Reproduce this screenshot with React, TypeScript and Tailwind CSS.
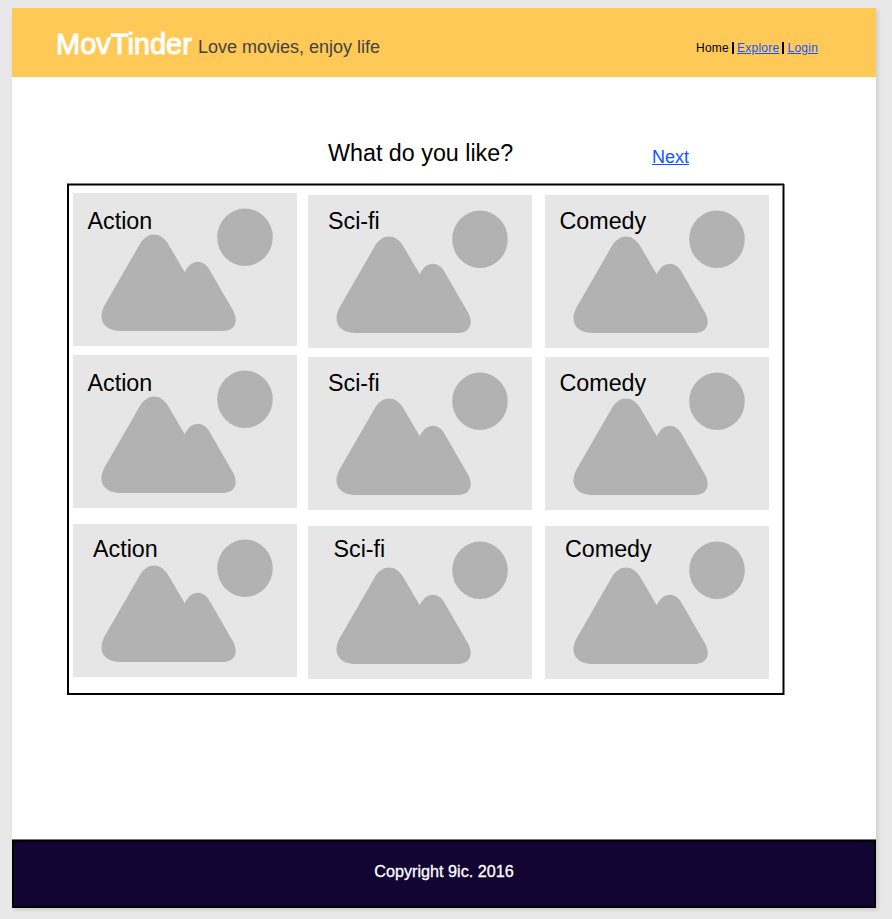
type Genre = { label: string };

const columns: { genres: Genre[]; className: string; labelClass: string; lastLabelClass: string }[] = [
  {
    genres: [{ label: "Action" }, { label: "Action" }, { label: "Action" }],
    className: "pt-[8.3px]",
    labelClass: "pt-[14px] pl-[14.5px]",
    lastLabelClass: "pt-[11px] pl-5",
  },
  {
    genres: [{ label: "Sci-fi" }, { label: "Sci-fi" }, { label: "Sci-fi" }],
    className: "ml-[10.7px] pt-[10px]",
    labelClass: "pt-[12px] pl-5",
    lastLabelClass: "pt-[9.4px] pl-[25.5px]",
  },
  {
    genres: [{ label: "Comedy" }, { label: "Comedy" }, { label: "Comedy" }],
    className: "ml-[12.7px] pt-[10px]",
    labelClass: "pt-[12px] pl-[14.5px]",
    lastLabelClass: "pt-[9.4px] pl-5",
  },
];

function Placeholder() {
  return (
    <svg className="absolute inset-0" width="224.3" height="153.2" viewBox="0 0 224.3 153.2" fill="#b2b2b2">
      <rect width="224.3" height="153.2" fill="#e6e6e6" />
      <ellipse cx="172" cy="44.3" rx="27.8" ry="28.7" />
      <path d="M66.8 51.2C74.5 38.4 87.5 38.4 95.3 51.2L111.8 79.3C118 65.5 130.5 65.5 136.8 77.2L160.3 118C166 129.3 161.5 138 149.5 138H48.5C31.5 138 24 127.4 31.2 112.9Z" />
    </svg>
  );
}

export default function App() {
  return (
    <div className="h-[919px] w-[892px] overflow-hidden bg-[#e8e8e8] pt-2 pl-3 font-['Liberation_Sans',Arial,sans-serif] text-black">
      <div className="flex h-[900px] w-[864px] flex-col bg-white shadow-[2px_2px_4px_rgba(0,0,0,0.12)]">
        <header className="flex h-[69px] shrink-0 items-start bg-[#ffc957] pl-11">
          <h1 className="w-[142px] pt-[18px] text-[29px] leading-9 whitespace-nowrap text-white [-webkit-text-stroke:1px_white]">MovTinder</h1>
          <p className="w-[498px] pt-[27px] text-[18px] leading-6 whitespace-nowrap text-[#434343]">Love movies, enjoy life</p>
          <nav className="flex pt-[31px] text-[12px] leading-[18px] tracking-[0.25px] whitespace-nowrap">
            <span>Home</span>
            <span className="mr-[3px] ml-[3px] mt-[3px] h-[12px] w-[2px] bg-black" />
            <a className="text-[#1155ff] underline">Explore</a>
            <span className="mr-[3px] ml-[3px] mt-[3px] h-[12px] w-[2px] bg-black" />
            <a className="text-[#1155ff] underline">Login</a>
          </nav>
        </header>
        <main className="flex-1">
          <div className="flex h-[107px] pt-[60px] pl-[316px] whitespace-nowrap">
            <h2 className="w-[324px] text-[23.3px] leading-8">What do you like?</h2>
            <a className="pt-[8px] text-[18px] leading-6 text-[#1155ff] underline">Next</a>
          </div>
          <section className="ml-[55px] flex h-[511px] w-[717px] border-t border-r border-b-2 border-l-2 border-black pl-1 shadow-[0_-1px_0_#808080,1px_0_0_#808080,inset_0_1px_0_#808080,inset_-1px_0_0_#808080]">
            {columns.map((column, i) => (
              <div key={i} className={column.className}>
                {column.genres.map((genre, row) => (
                  <article
                    key={row}
                    className={`relative h-[153.2px] w-[224.3px] text-[23.3px] leading-7 ${row === 1 ? "mt-[8.8px] mb-[15.4px]" : ""}`}
                  >
                    <Placeholder />
                    <h3 className={`relative ${row === 2 ? column.lastLabelClass : column.labelClass}`}>{genre.label}</h3>
                  </article>
                ))}
              </div>
            ))}
          </section>
        </main>
        <footer className="flex h-[68px] shrink-0 items-center justify-center border-2 border-black bg-[#120433] pb-[5px] text-[16.2px] text-white shadow-[0_-1px_0_#777] [-webkit-text-stroke:0.3px_white]">
          Copyright 9ic. 2016
        </footer>
      </div>
    </div>
  );
}
